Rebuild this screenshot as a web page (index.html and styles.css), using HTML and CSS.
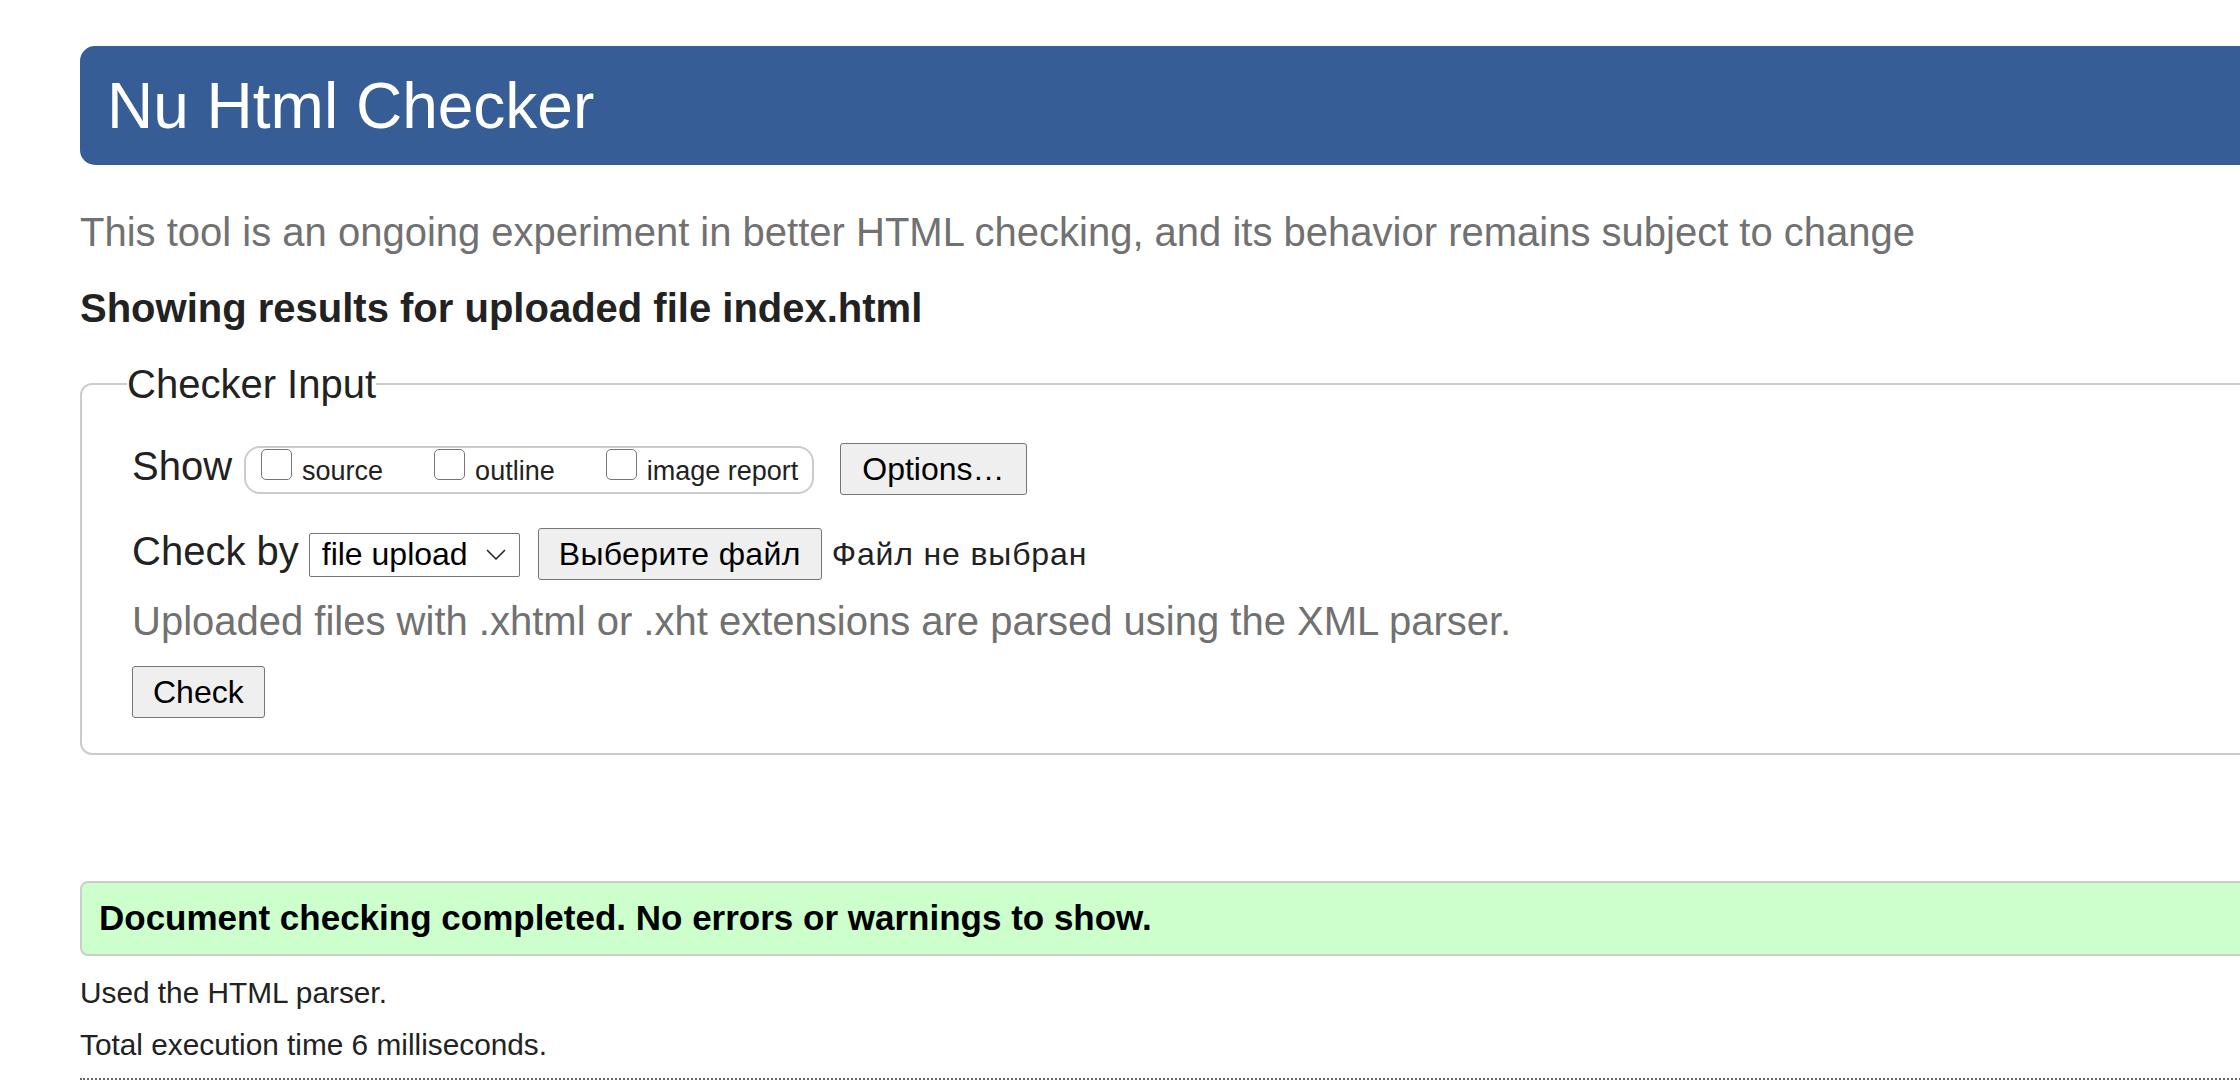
FILE: index.html
```html
<!DOCTYPE html>
<html lang="en">
<head>
<meta charset="utf-8">
<title>Showing results for uploaded file index.html - Nu Html Checker</title>
<link rel="stylesheet" href="styles.css">
</head>
<body>
<div class="page">
  <h1 class="masthead">Nu Html Checker</h1>
  <p class="subtitle">This tool is an ongoing experiment in better HTML checking, and its behavior remains subject to change</p>
  <h2 class="results-title">Showing results for uploaded file index.html</h2>
  <form class="checker" onsubmit="return false">
    <fieldset class="checker-input">
      <legend>Checker Input</legend>
      <div class="row">
        <span class="row-label">Show</span>
        <span class="show-group">
          <label class="opt"><input type="checkbox" class="cb"><span>source</span></label>
          <label class="opt"><input type="checkbox" class="cb"><span>outline</span></label>
          <label class="opt last"><input type="checkbox" class="cb"><span>image report</span></label>
        </span>
        <button type="button" class="btn btn-options">Options…</button>
      </div>
      <div class="row row-check">
        <span class="row-label">Check by</span>
        <span class="select"><span class="select-text">file upload</span><svg class="chev" width="20" height="11" viewBox="0 0 20 11"><polyline points="1,1 10,10 19,1" fill="none" stroke="#222" stroke-width="1.5"/></svg></span>
        <button type="button" class="btn btn-file">Выберите файл</button>
        <span class="file-status">Файл не выбран</span>
      </div>
      <p class="hint">Uploaded files with .xhtml or .xht extensions are parsed using the XML parser.</p>
      <div class="submit-row"><button type="button" class="btn">Check</button></div>
    </fieldset>
  </form>
  <div class="success"><p>Document checking completed. No errors or warnings to show.</p></div>
  <p class="meta first">Used the HTML parser.</p>
  <p class="meta">Total execution time 6 milliseconds.</p>
  <hr class="dotted">
</div>
</body>
</html>
```

FILE: styles.css
```css
html {
  overflow: hidden;
  background: #fff;
}

body {
  margin: 0;
  font-family: "Liberation Sans", Arial, Helvetica, sans-serif;
  color: #222;
}

.page {
  margin-left: 80px;
  margin-right: -220px;
  padding-top: 46px;
}

.masthead {
  margin: 0;
  padding: 23px 0 22px 27px;
  font-size: 64px;
  line-height: 74px;
  font-weight: normal;
  color: #fff;
  background: #365d95;
  border-radius: 15px;
}

.subtitle {
  margin: 44px 0 0;
  font-size: 40px;
  line-height: 46px;
  color: #717171;
}

.results-title {
  margin: 30px 0 0;
  font-size: 40px;
  line-height: 46px;
  font-weight: bold;
  color: #222;
}

.checker {
  margin: 30px 0 0;
}

.checker-input {
  margin: 0;
  border: 2px solid #cccccc;
  border-radius: 12px;
  padding: 36px 0 35px 50px;
  min-width: 0;
}

.checker-input legend {
  margin-left: -5px;
  padding: 0;
  font-size: 40px;
  line-height: 46px;
  color: #222;
}

.row {
  display: flex;
  align-items: baseline;
}

.row-check {
  margin-top: 33px;
}

.row-label {
  font-size: 40px;
  line-height: 46px;
  color: #222;
}

.show-group {
  display: inline-flex;
  align-items: baseline;
  margin-left: 12px;
  padding: 1px 14px 5px 15px;
  border: 2px solid #cccccc;
  border-radius: 16px;
  font-size: 27px;
  line-height: 31px;
}

.opt {
  display: inline-flex;
  align-items: baseline;
  margin-right: 51px;
  color: #222;
}

.opt.last {
  margin-right: 0;
}

.cb {
  -webkit-appearance: none;
  appearance: none;
  display: inline-block;
  width: 31px;
  height: 31px;
  margin: 0 10px 0 0;
  border: 1px solid #767676;
  border-radius: 5px;
  background: #fff;
}

.btn {
  font-family: "Liberation Sans", Arial, Helvetica, sans-serif;
  font-size: 32px;
  line-height: 37px;
  padding: 7px 20px 6px;
  color: #000;
  background: #efefef;
  border: 1px solid #767676;
  border-radius: 3px;
}

.btn-options {
  margin-left: 26px;
  padding-left: 21px;
  padding-right: 21px;
}

.select {
  display: inline-flex;
  align-items: center;
  box-sizing: border-box;
  width: 211px;
  height: 44px;
  margin-left: 10px;
  padding: 0 13px 0 12px;
  border: 1px solid #767676;
  border-radius: 2px;
  background: #fff;
  font-size: 32px;
  line-height: 37px;
  color: #000;
}

.chev {
  margin-left: auto;
}

.btn-file {
  margin-left: 18px;
  letter-spacing: 0.35px;
}

.file-status {
  margin-left: 10px;
  font-size: 32px;
  line-height: 37px;
  letter-spacing: 0.85px;
  color: #222;
}

.hint {
  margin: 18px 0 0;
  font-size: 40px;
  line-height: 46px;
  color: #717171;
}

.submit-row {
  display: flex;
  margin-top: 22px;
}

.success {
  margin-top: 126px;
  padding: 15px 0 16px 17px;
  background: #ccffcc;
  border: 2px solid #cccccc;
  border-radius: 8px;
}

.success p {
  margin: 0;
  font-size: 35px;
  line-height: 40px;
  font-weight: bold;
  color: #000;
}

.meta {
  margin: 19px 0 0;
  font-size: 29.8px;
  line-height: 33px;
  color: #222;
}

.meta.first {
  margin-top: 20px;
}

.dotted {
  margin: 17px 0 0;
  height: 0;
  border: 0;
  border-top: 2px dotted #666;
}
```
